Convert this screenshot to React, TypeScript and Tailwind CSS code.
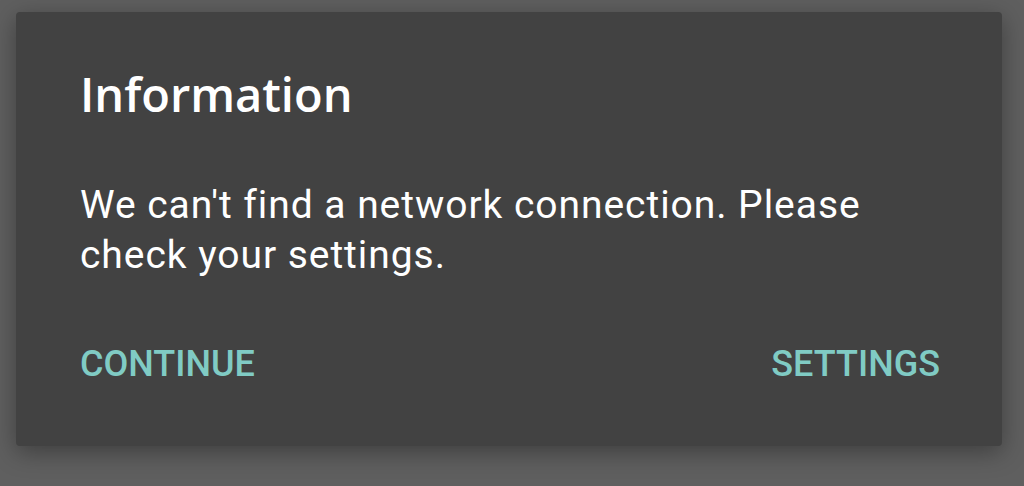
import React from 'react';

export default function App() {
  return (
    <div className="w-[1024px] h-[486px] bg-[#5f5f5f] px-4 pt-3 overflow-hidden" style={{ fontFamily: 'Roboto, "Liberation Sans", sans-serif' }}>
      <div className="w-[986px] h-[434px] bg-[#424242] rounded-[4px] shadow-[0_6px_24px_rgba(0,0,0,0.35)] pl-16 pr-[62px] pt-[52px] flex flex-col">
        <h2 className="text-white text-[47px] font-semibold leading-[60px]" style={{ fontFamily: '"Open Sans", "Noto Sans", sans-serif' }}>
          Information
        </h2>
        <p className="text-white text-[39px] leading-[50px] tracking-[0.95px] mt-[56px] max-w-[820px]">
          We can't find a network connection. Please check your settings.
        </p>
        <div className="flex justify-between mt-[66px]">
          <button className="text-[#80cbc4] text-[36px] font-medium leading-none">CONTINUE</button>
          <button className="text-[#80cbc4] text-[36px] font-medium leading-none">SETTINGS</button>
        </div>
      </div>
    </div>
  );
}
